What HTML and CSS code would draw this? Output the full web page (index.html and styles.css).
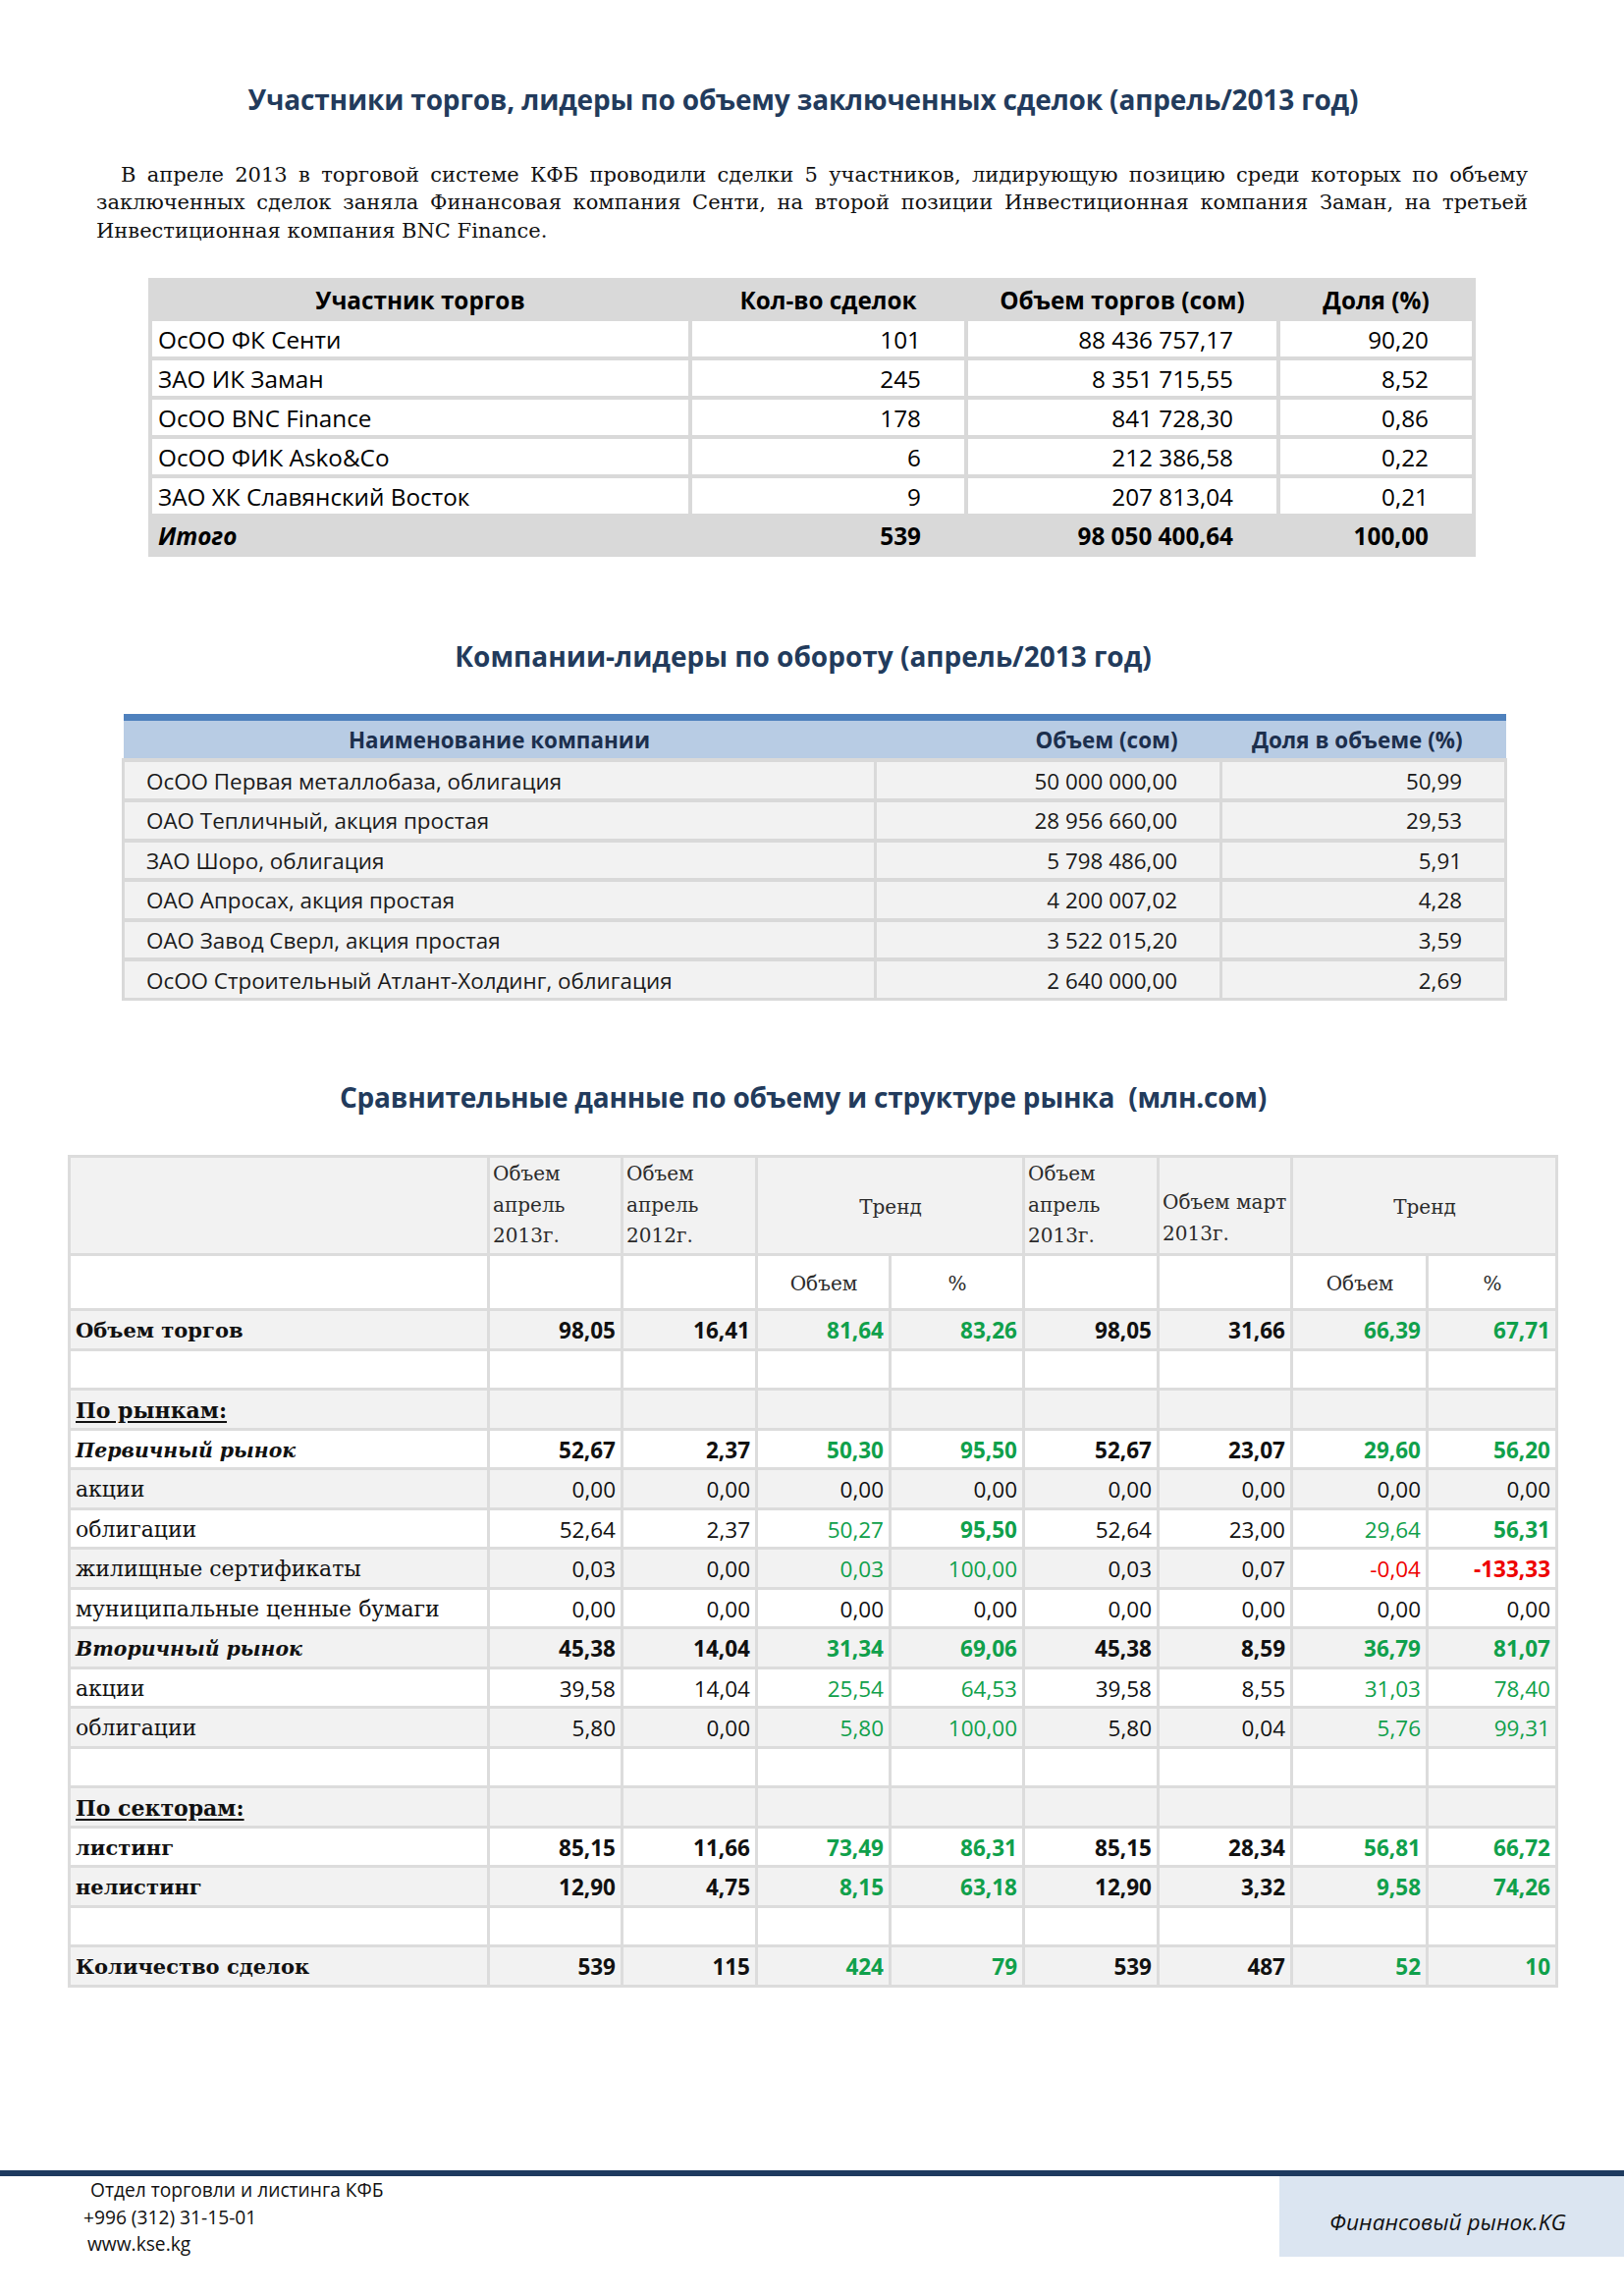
FILE: index.html
```html
<!DOCTYPE html>
<html lang="ru">
<head>
<meta charset="utf-8">
<title>Финансовый рынок.KG</title>
<link rel="stylesheet" href="styles.css">
</head>
<body>
<div class="page">
  <h1 class="title t1">Участники торгов, лидеры по объему заключенных сделок (апрель/2013 год)</h1>
  <p class="intro">
    <span class="line first">В апреле 2013 в торговой системе КФБ проводили сделки 5 участников, лидирующую позицию среди которых по объему</span>
    <span class="line">заключенных сделок заняла Финансовая компания Сенти, на второй позиции Инвестиционная компания Заман, на третьей</span>
    <span class="line last">Инвестиционная компания BNC Finance.</span>
  </p>

  <table class="leaders">
    <colgroup><col class="c1"><col class="c2"><col class="c3"><col class="c4"></colgroup>
    <thead>
      <tr><th>Участник торгов</th><th>Кол-во сделок</th><th>Объем торгов (сом)</th><th>Доля (%)</th></tr>
    </thead>
    <tbody>
      <tr><td>ОсОО ФК Сенти</td><td class="num">101</td><td class="num">88 436 757,17</td><td class="num">90,20</td></tr>
      <tr><td>ЗАО ИК Заман</td><td class="num">245</td><td class="num">8 351 715,55</td><td class="num">8,52</td></tr>
      <tr><td>ОсОО BNC Finance</td><td class="num">178</td><td class="num">841 728,30</td><td class="num">0,86</td></tr>
      <tr><td>ОсОО ФИК Asko&amp;Co</td><td class="num">6</td><td class="num">212 386,58</td><td class="num">0,22</td></tr>
      <tr><td>ЗАО ХК Славянский Восток</td><td class="num">9</td><td class="num">207 813,04</td><td class="num">0,21</td></tr>
      <tr class="total"><td><em>Итого</em></td><td class="num">539</td><td class="num">98 050 400,64</td><td class="num">100,00</td></tr>
    </tbody>
  </table>

  <h2 class="title t2">Компании-лидеры по обороту (апрель/2013 год)</h2>

  <table class="companies">
    <colgroup><col class="c1"><col class="c2"><col class="c3"></colgroup>
    <thead>
      <tr><th class="name">Наименование компании</th><th class="num">Объем (сом)</th><th class="num">Доля в объеме (%)</th></tr>
    </thead>
    <tbody>
      <tr><td>ОсОО Первая металлобаза, облигация</td><td class="num">50 000 000,00</td><td class="num">50,99</td></tr>
      <tr><td>ОАО Тепличный, акция простая</td><td class="num">28 956 660,00</td><td class="num">29,53</td></tr>
      <tr><td>ЗАО Шоро, облигация</td><td class="num">5 798 486,00</td><td class="num">5,91</td></tr>
      <tr><td>ОАО Апросах, акция простая</td><td class="num">4 200 007,02</td><td class="num">4,28</td></tr>
      <tr><td>ОАО Завод Сверл, акция простая</td><td class="num">3 522 015,20</td><td class="num">3,59</td></tr>
      <tr><td>ОсОО Строительный Атлант-Холдинг, облигация</td><td class="num">2 640 000,00</td><td class="num">2,69</td></tr>
    </tbody>
  </table>

  <h2 class="title t3">Сравнительные данные по объему и структуре рынка&nbsp; (млн.сом)</h2>

  <table class="market">
    <colgroup>
      <col class="m1"><col class="m2"><col class="m3"><col class="m4"><col class="m5"><col class="m6"><col class="m7"><col class="m8"><col class="m9">
    </colgroup>
    <thead>
      <tr class="h1 g">
        <th></th>
        <th class="top">Объем<br>апрель<br>2013г.</th>
        <th class="top">Объем<br>апрель<br>2012г.</th>
        <th class="mid" colspan="2">Тренд</th>
        <th class="top">Объем<br>апрель<br>2013г.</th>
        <th class="bot">Объем март<br>2013г.</th>
        <th class="mid" colspan="2">Тренд</th>
      </tr>
      <tr class="h2">
        <th></th><th></th><th></th><th class="mid">Объем</th><th class="mid">%</th><th></th><th></th><th class="mid">Объем</th><th class="mid">%</th>
      </tr>
    </thead>
    <tbody>
      <tr class="g b"><td class="lbl">Объем торгов</td><td>98,05</td><td>16,41</td><td class="up">81,64</td><td class="up">83,26</td><td>98,05</td><td>31,66</td><td class="up">66,39</td><td class="up">67,71</td></tr>
      <tr class="empty"><td></td><td></td><td></td><td></td><td></td><td></td><td></td><td></td><td></td></tr>
      <tr class="g"><td class="lbl sect">По рынкам:</td><td></td><td></td><td></td><td></td><td></td><td></td><td></td><td></td></tr>
      <tr class="b"><td class="lbl it">Первичный рынок</td><td>52,67</td><td>2,37</td><td class="up">50,30</td><td class="up">95,50</td><td>52,67</td><td>23,07</td><td class="up">29,60</td><td class="up">56,20</td></tr>
      <tr class="g"><td class="lbl">акции</td><td>0,00</td><td>0,00</td><td>0,00</td><td>0,00</td><td>0,00</td><td>0,00</td><td>0,00</td><td>0,00</td></tr>
      <tr><td class="lbl">облигации</td><td>52,64</td><td>2,37</td><td class="up">50,27</td><td class="up strong">95,50</td><td>52,64</td><td>23,00</td><td class="up">29,64</td><td class="up strong">56,31</td></tr>
      <tr class="g"><td class="lbl">жилищные сертификаты</td><td>0,03</td><td>0,00</td><td class="up">0,03</td><td class="up">100,00</td><td>0,03</td><td>0,07</td><td class="down w">-0,04</td><td class="down w strong">-133,33</td></tr>
      <tr><td class="lbl">муниципальные ценные бумаги</td><td>0,00</td><td>0,00</td><td>0,00</td><td>0,00</td><td>0,00</td><td>0,00</td><td>0,00</td><td>0,00</td></tr>
      <tr class="g b"><td class="lbl it">Вторичный рынок</td><td>45,38</td><td>14,04</td><td class="up">31,34</td><td class="up">69,06</td><td>45,38</td><td>8,59</td><td class="up">36,79</td><td class="up">81,07</td></tr>
      <tr><td class="lbl">акции</td><td>39,58</td><td>14,04</td><td class="up">25,54</td><td class="up">64,53</td><td>39,58</td><td>8,55</td><td class="up">31,03</td><td class="up">78,40</td></tr>
      <tr class="g"><td class="lbl">облигации</td><td>5,80</td><td>0,00</td><td class="up">5,80</td><td class="up">100,00</td><td>5,80</td><td>0,04</td><td class="up">5,76</td><td class="up">99,31</td></tr>
      <tr class="empty"><td></td><td></td><td></td><td></td><td></td><td></td><td></td><td></td><td></td></tr>
      <tr class="g"><td class="lbl sect">По секторам:</td><td></td><td></td><td></td><td></td><td></td><td></td><td></td><td></td></tr>
      <tr class="b"><td class="lbl">листинг</td><td>85,15</td><td>11,66</td><td class="up">73,49</td><td class="up">86,31</td><td>85,15</td><td>28,34</td><td class="up">56,81</td><td class="up">66,72</td></tr>
      <tr class="g b"><td class="lbl">нелистинг</td><td>12,90</td><td>4,75</td><td class="up">8,15</td><td class="up">63,18</td><td>12,90</td><td>3,32</td><td class="up">9,58</td><td class="up">74,26</td></tr>
      <tr class="empty"><td></td><td></td><td></td><td></td><td></td><td></td><td></td><td></td><td></td></tr>
      <tr class="g b"><td class="lbl">Количество сделок</td><td>539</td><td>115</td><td class="up">424</td><td class="up">79</td><td>539</td><td>487</td><td class="up">52</td><td class="up">10</td></tr>
    </tbody>
  </table>

  <footer class="foot">
    <div class="foot-info">
      <div class="fl l1">Отдел торговли и листинга КФБ</div>
      <div class="fl l2">+996 (312) 31-15-01</div>
      <div class="fl l3">www.kse.kg</div>
    </div>
    <div class="foot-brand">Финансовый рынок.KG</div>
  </footer>
</div>
</body>
</html>
```

FILE: styles.css
```css
* { box-sizing: border-box; }
html, body { margin: 0; padding: 0; background: #fff; }
.page {
  width: 1654px;
  height: 2338px;
  overflow: hidden;
  position: relative;
  color: #000;
  font-family: "Open Sans", "Noto Sans", sans-serif;
}

.title {
  margin: 0;
  padding-right: 18px;
  text-align: center;
  font-family: "Open Sans", "Noto Sans", sans-serif;
  font-weight: 700;
  font-size: 28px;
  line-height: 40px;
  color: #223b5c;
}
.t1 { padding-top: 81px; letter-spacing: -0.15px; }
.t2 { margin-top: 81px; }
.t3 { margin-top: 78px; letter-spacing: -0.2px; }

.intro {
  margin: 43px 98px 0 98px;
  font-family: "DejaVu Serif", "Liberation Serif", serif;
  font-size: 21px;
  line-height: 28.3px;
  color: #111;
}
.intro .line {
  display: block;
  text-align: justify;
  text-align-last: justify;
  white-space: nowrap;
}
.intro .line.first { padding-left: 25px; }
.intro .line.last { text-align-last: left; }

/* Table 1 */
.leaders {
  margin: 34px 0 0 151px;
  width: 1352px;
  table-layout: fixed;
  border-collapse: separate;
  border-spacing: 4px;
  background: #d9d9d9;
  font-size: 24.3px;
}
.leaders .c1 { width: 546px; }
.leaders .c2 { width: 277px; }
.leaders .c3 { width: 314px; }
.leaders .c4 { width: 195px; }
.leaders th, .leaders td {
  height: 36px;
  line-height: 34px;
  padding: 0 6px;
  white-space: nowrap;
}
.leaders th { font-weight: 700; text-align: center; background: #d9d9d9; padding-top: 2px; }
.leaders td { background: #fff; padding-top: 2px; }
.leaders td.num { text-align: right; padding-right: 44px; }
.leaders tr.total td { background: #d9d9d9; font-weight: 700; }
.leaders tr.total em { font-style: italic; }

/* Table 2 */
.companies {
  margin: 39px 0 0 124px;
  width: 1408px;
  table-layout: fixed;
  border-collapse: collapse;
  font-size: 22.4px;
  color: #1a1a1a;
}
.companies .c1 { width: 766px; }
.companies .c2 { width: 352px; }
.companies .c3 { width: 290px; }
.companies thead th {
  background: #b8cce4;
  border-top: 7px solid #4f81bd;
  height: 44px;
  line-height: 34px;
  color: #1c2f4d;
  font-weight: 700;
  padding: 2px 44px 0 10px;
}
.companies thead th.name { text-align: center; padding: 2px 0 0 0; }
.companies thead th.num { text-align: right; }
.companies td {
  background: #f2f2f2;
  border: 3px solid #d9d9d9;
  border-top-width: 4px;
  height: 40.6px;
  line-height: 34px;
  padding: 2px 10px 0 22px;
  white-space: nowrap;
}
.companies td.num { text-align: right; padding-right: 43px; }

/* Table 3 */
.market {
  margin: 39px 0 0 69px;
  width: 1515px;
  table-layout: fixed;
  border-collapse: collapse;
  font-size: 22.5px;
}
.market .m1 { width: 427px; }
.market .m2 { width: 136px; }
.market .m3 { width: 137px; }
.market .m4 { width: 136px; }
.market .m5 { width: 136px; }
.market .m6 { width: 137px; }
.market .m7 { width: 136px; }
.market .m8 { width: 138px; }
.market .m9 { width: 132px; }
.market th, .market td {
  border: 3px solid #dcdcdc;
  padding: 0 5px;
  white-space: nowrap;
  background: #fff;
}
.market tr.g > th, .market tr.g > td { background: #f2f2f2; }
.market tr.g > td.w { background: #fff; }
.market thead th {
  font-family: "DejaVu Serif", "Liberation Serif", serif;
  font-weight: 400;
  font-size: 20px;
  line-height: 31.5px;
  color: #2b2b2b;
  text-align: left;
  padding: 0 2px 0 3px;
}
.market tr.h1 { height: 100px; }
.market tr.h2 { height: 56px; }
.market th.top { vertical-align: top; padding-top: 1px; }
.market th.bot { vertical-align: bottom; padding-bottom: 4px; }
.market th.mid { vertical-align: middle; text-align: center; padding-top: 3px; }
.market tbody tr { height: 40.5px; }
.market tbody td {
  text-align: right;
  line-height: 32px;
  color: #111;
  padding-top: 2px;
}
.market tbody td.lbl {
  text-align: left;
  font-family: "DejaVu Serif", "Liberation Serif", serif;
  font-size: 22px;
}
.market tr.b td { font-weight: 700; }
.market tr.b td.lbl { font-size: 21px; }
.market td.it { font-style: italic; font-size: 20.4px !important; }
.market td.sect { font-weight: 700; font-size: 21px; text-decoration: underline; text-underline-offset: 3px; }
.market td.up { color: #10a04b; }
.market td.down { color: #ee0000; }
.market td.strong { font-weight: 700; }

/* Footer */
.foot {
  position: absolute;
  left: 0;
  right: 0;
  top: 2210px;
  border-top: 6px solid #1e3a5f;
  display: flex;
  justify-content: space-between;
  align-items: flex-start;
}
.foot-info {
  padding: 0 0 0 92px;
  font-size: 19.2px;
  line-height: 27.5px;
  color: #111;
}
.foot-info .l2 { margin-left: -7px; }
.foot-info .l3 { margin-left: -3px; }
.foot-brand {
  width: 351px;
  height: 82px;
  background: #dbe5f1;
  display: flex;
  align-items: center;
  justify-content: center;
  padding: 10px 8px 0 0;
  font-style: italic;
  font-size: 22.7px;
  color: #111;
}
```
